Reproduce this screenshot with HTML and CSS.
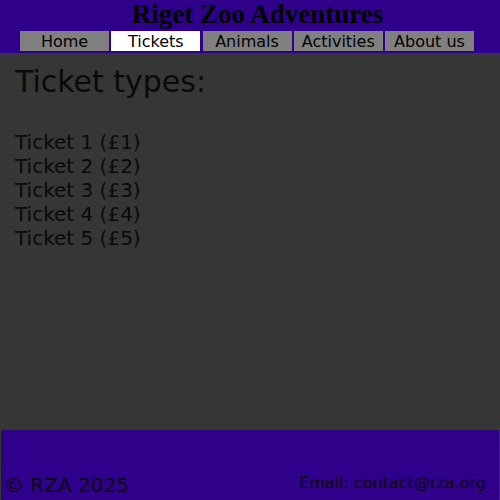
FILE: index.html
```html
<!DOCTYPE html>
<html lang="en">
<head>
<meta charset="utf-8">
<title>Riget Zoo Adventures - Tickets</title>
<link rel="stylesheet" href="styles.css">
</head>
<body>
<header class="site-header">
  <h1 class="site-title">Riget Zoo Adventures</h1>
  <nav class="nav">
    <a class="nav-btn" href="#">Home</a>
    <a class="nav-btn nav-btn-active" href="#">Tickets</a>
    <a class="nav-btn" href="#">Animals</a>
    <a class="nav-btn" href="#">Activities</a>
    <a class="nav-btn" href="#">About us</a>
  </nav>
</header>
<main class="content">
  <h2 class="page-heading">Ticket types:</h2>
  <ul class="ticket-list">
    <li>Ticket 1 (£1)</li>
    <li>Ticket 2 (£2)</li>
    <li>Ticket 3 (£3)</li>
    <li>Ticket 4 (£4)</li>
    <li>Ticket 5 (£5)</li>
  </ul>
</main>
<footer class="site-footer">
  <p class="copyright">© RZA 2025</p>
  <p class="email">Email: contact@rza.org</p>
</footer>
</body>
</html>
```

FILE: styles.css
```css
html, body {
  margin: 0;
  padding: 0;
}

body {
  min-height: 100vh;
  display: flex;
  flex-direction: column;
  background: #363636;
  font-family: "DejaVu Sans", sans-serif;
  color: #0a0a0a;
}

.site-header {
  background: #2f008a;
  padding: 1px 0 1px 0;
  height: 51px;
}

.site-title {
  margin: 0;
  padding-left: 15px;
  text-align: center;
  font-family: "Liberation Serif", "Times New Roman", serif;
  font-weight: bold;
  font-size: 27px;
  line-height: 26px;
  color: #000;
}

.nav {
  display: flex;
  gap: 2.25px;
  padding-left: 20px;
  margin-top: 4px;
}

.nav-btn {
  display: block;
  width: 89px;
  height: 18px;
  padding-top: 2px;
  line-height: 18px;
  background: #808080;
  color: #000;
  text-decoration: none;
  text-align: center;
  font-size: 16px;
}

.nav-btn-active {
  background: #fff;
}

.content {
  flex: 1;
  padding: 11px 15px;
}

.page-heading {
  margin: 0;
  font-weight: normal;
  font-size: 30px;
  line-height: 35px;
}

.ticket-list {
  list-style: none;
  margin: 31px 0 0 0;
  padding: 0;
  font-size: 20px;
  line-height: 24px;
}

.site-footer {
  height: 70px;
  box-sizing: border-box;
  margin: 0 1px;
  background: #2f008a;
  display: flex;
  justify-content: space-between;
  align-items: flex-start;
  padding: 43px 13px 0 3px;
}

.site-footer p {
  margin: 0;
}

.copyright {
  font-size: 20px;
}

.email {
  font-size: 16px;
  margin-top: 1px;
}
```
